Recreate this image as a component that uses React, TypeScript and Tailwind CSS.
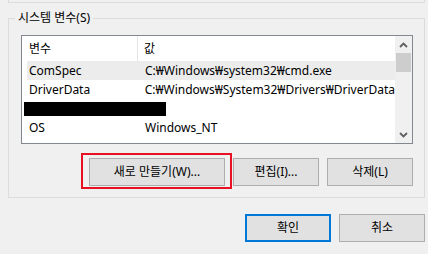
import React from "react";

const font = "font-['Noto_Sans','Noto_Sans_CJK_KR',sans-serif]";

function Chevron({ up }: { up?: boolean }) {
  return (
    <svg width="9" height="6" viewBox="0 0 9 6" className="block">
      <path
        d={up ? "M1 5 L4.5 1.5 L8 5" : "M1 1 L4.5 4.5 L8 1"}
        fill="none"
        stroke="#606060"
        strokeWidth="1.8"
      />
    </svg>
  );
}

function Btn({ children, w, primary }: { children: React.ReactNode; w: string; primary?: boolean }) {
  return (
    <div
      className={`${w} h-[28px] flex items-center justify-center bg-[#e1e1e1] text-[12px] text-black ${
        primary ? "border-2 border-[#0078d7]" : "border border-[#adadad]"
      }`}
    >
      {children}
    </div>
  );
}

const rows = [
  { name: "ComSpec", value: "C:₩Windows₩system32₩cmd.exe", sel: true },
  { name: "DriverData", value: "C:₩Windows₩System32₩Drivers₩DriverData" },
  { redacted: true },
  { name: "OS", value: "Windows_NT" },
];

export default function App() {
  return (
    <div className={`w-[428px] h-[254px] bg-[#f0f0f0] overflow-hidden ${font} text-[12px] text-black`}>
      {/* remnant of previous group box */}
      <div className="ml-[8px] w-[417px] h-[3px] border-x border-b border-[#dcdcdc]" />

      {/* System variables group */}
      <div className="relative ml-[8px] mt-[15px] w-[417px] h-[180px] border border-[#dcdcdc] pt-[16px] pl-[12px] pr-[11px]">
        <div className="absolute left-[6px] top-[-10px] px-[3px] bg-[#f0f0f0] leading-[18px]">시스템 변수(S)</div>

        {/* list view */}
        <div className="w-[392px] h-[109px] border border-[#828790] bg-white flex overflow-hidden">
          <div className="flex-1 flex flex-col overflow-hidden">
            <div className="h-[25px] flex items-center shrink-0">
              <div className="w-[116px] h-full flex items-center pl-[7px] border-r border-[#e5e5e5]">변수</div>
              <div className="pl-[6px]">값</div>
            </div>
            {rows.map((r, i) =>
              r.redacted ? (
                <div key={i} className="h-[19px] shrink-0 pt-[3px] pl-[2px]">
                  <div className="w-[142px] h-[14px] bg-black" />
                </div>
              ) : (
                <div
                  key={i}
                  className={`h-[19px] shrink-0 ml-[5px] flex items-center whitespace-nowrap ${r.sel ? "bg-[#ececec]" : ""}`}
                >
                  <div className="w-[118px] pl-[2px]">{r.name}</div>
                  <div>{r.value}</div>
                </div>
              )
            )}
          </div>
          {/* scrollbar */}
          <div className="w-[17px] h-full bg-[#f0f0f0] flex flex-col items-center shrink-0">
            <div className="h-[17px] flex items-center justify-center">
              <Chevron up />
            </div>
            <div className="w-[15px] h-[19px] bg-[#cdcdcd]" />
            <div className="flex-1" />
            <div className="h-[17px] flex items-center justify-center">
              <Chevron />
            </div>
          </div>
        </div>

        {/* buttons */}
        <div className="mt-[14px] flex justify-end gap-[8px]">
          <div className="relative">
            <Btn w="w-[136px]">새로 만들기(W)...</Btn>
            <div className="absolute left-[-8px] top-[-5px] right-[-7px] bottom-[-3px] border-2 border-[#e81123]" />
          </div>
          <Btn w="w-[86px]">편집(I)...</Btn>
          <Btn w="w-[86px]">삭제(L)</Btn>
        </div>
      </div>

      {/* OK / Cancel */}
      <div className="mt-[16px] pr-[3px] flex justify-end gap-[8px]">
        <Btn w="w-[86px]" primary>
          확인
        </Btn>
        <Btn w="w-[86px]">취소</Btn>
      </div>
    </div>
  );
}
